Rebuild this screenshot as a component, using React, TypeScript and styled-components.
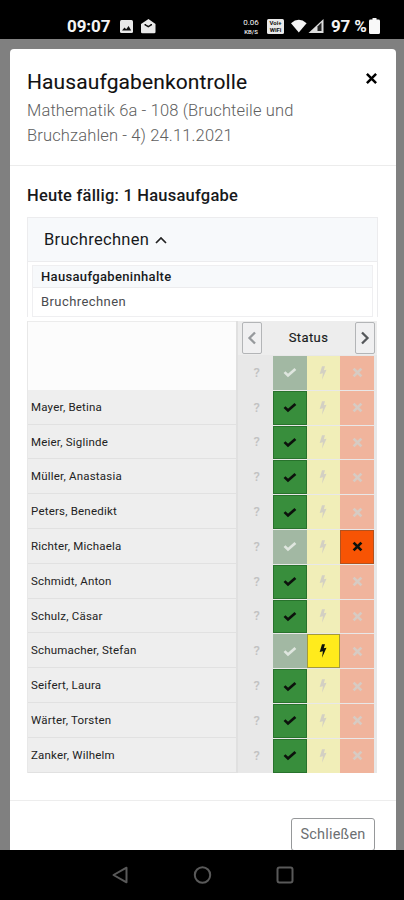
import React from "react";
import styled, { createGlobalStyle } from "styled-components";

const Global = createGlobalStyle`
  * { box-sizing: border-box; }
  body { margin: 0; background: #000; font-family: Roboto, "Liberation Sans", sans-serif; color: #17191c; }
`;

const Screen = styled.div`
  width: 404px;
  height: 900px;
  display: flex;
  flex-direction: column;
  overflow: hidden;
  background: #000;
`;

const StatusBar = styled.header`
  height: 39px;
  flex: none;
  display: flex;
  align-items: center;
  padding: 13px 24px 0 67px;
  color: #f4f4f4;
  font-size: 17px;
  font-weight: 700;
  svg { display: block; flex: none; }
`;
const Clock = styled.span`
  width: 53px;
  letter-spacing: -0.1px;
  line-height: 22px;
`;
const Spacer = styled.span`
  flex: 1;
`;
const NetRate = styled.span`
  display: flex;
  flex-direction: column;
  width: 18px;
  margin-right: 7px;
  font-size: 8px;
  line-height: 10px;
  font-weight: 400;
  text-align: center;
  small { font-size: 6px; line-height: 7px; font-weight: 500; }
`;
const Wifi = styled.span`
  display: flex;
  flex-direction: column;
  justify-content: center;
  width: 17px;
  height: 15px;
  margin-right: 7px;
  border-radius: 1.5px;
  background: #e9e9e9;
  color: #111;
  font-size: 6px;
  line-height: 7px;
  text-align: center;
`;
const Percent = styled.span`
  margin-left: 7px;
  width: 38px;
  white-space: nowrap;
  font-size: 17px;
  line-height: 22px;
  letter-spacing: -0.2px;
`;

const Backdrop = styled.main`
  flex: 1;
  min-height: 0;
  padding: 10px 8px 0 10px;
  background: #808080;
`;
const Dialog = styled.section`
  height: 100%;
  display: flex;
  flex-direction: column;
  overflow: hidden;
  border-radius: 4px 4px 0 0;
  background: #fff;
`;
const DialogHead = styled.div`
  height: 117px;
  flex: none;
  display: flex;
  justify-content: space-between;
  padding: 19px 18px 0 17px;
  border-bottom: 1px solid #ececec;
`;
const Title = styled.h1`
  margin: 0;
  font-size: 21px;
  line-height: 28px;
  font-weight: 400;
  letter-spacing: 0.11px;
  color: #111;
  -webkit-text-stroke: 0.1px #111;
`;
const Subtitle = styled.p`
  margin: 2px 0 0;
  width: 300px;
  font-size: 16.5px;
  line-height: 25px;
  font-weight: 300;
  letter-spacing: 0.14px;
  color: #606060;
`;
const CloseIcon = styled.button`
  height: 20px;
  padding: 0;
  border: 0;
  background: none;
  svg { display: block; }
`;
const DialogBody = styled.div`
  flex: none;
  height: 635px;
  padding: 18px 18px 0 17px;
  border-bottom: 1px solid #ededed;
`;
const Due = styled.h2`
  margin: 0 0 9px;
  font-size: 16.5px;
  line-height: 24px;
  font-weight: 500;
  letter-spacing: 0.22px;
`;
const Card = styled.div`
  border: 1px solid #ececee;
  border-bottom: 0;
`;
const CardToggle = styled.div`
  height: 44px;
  display: flex;
  align-items: center;
  gap: 6px;
  padding-left: 16px;
  border-bottom: 1px solid #ececee;
  background: #f7f9fb;
  font-size: 16.5px;
  letter-spacing: 0.3px;
`;
const Contents = styled.div`
  margin: 3px 4px 4px;
  border: 1px solid #efeff1;
  font-size: 13px;
  letter-spacing: 0.34px;
`;
const ContentsHead = styled.div`
  height: 22px;
  padding-left: 8px;
  border-bottom: 1px solid #ececee;
  background: #f7f9fb;
  font-weight: 500;
  line-height: 21px;
`;
const ContentsLine = styled.div`
  height: 28px;
  padding-left: 8px;
  line-height: 27px;
  letter-spacing: 0.42px;
  color: #4a4c4f;
`;

const Grid = styled.div`
  display: flex;
  width: 350px;
  height: 452px;
  background: #ececec;
`;
const Names = styled.div`
  width: 211px;
  border-right: 2px solid #e0e0e0;
  border-left: 1px solid #e8e8e8;
`;
const NamesHead = styled.div`
  height: 68.8px;
  border-top: 1px solid #ececec;
  background: #fcfcfc;
`;
const Name = styled.div`
  height: 34.8px;
  padding-left: 3px;
  border-bottom: 1px solid #e1e1e1;
  background: #eee;
  font-size: 11.5px;
  line-height: 35.4px;
  letter-spacing: 0.2px;
  color: #222;
`;
const Statuses = styled.div`
  flex: 1;
  background: #e8e8e8;
`;
const StatusNav = styled.div`
  height: 34px;
  display: flex;
  align-items: flex-start;
  justify-content: space-between;
  padding: 1px 2px 0 4px;
  background: #ededed;
  font-size: 13px;
  line-height: 32px;
  letter-spacing: 0.4px;
  -webkit-text-stroke: 0.15px #222;
`;
const NavButton = styled.button<{ $strong?: boolean }>`
  width: 20px;
  height: 32px;
  display: grid;
  place-items: center;
  padding: 0;
  border: 1px solid #b3b5b7;
  border-radius: 2px;
  background: #f0f0f1;
  color: ${(p) => (p.$strong ? "#55585b" : "#96999c")};
`;
const StatusRow = styled.div`
  height: 34.8px;
  display: grid;
  grid-template-columns: 34.5px 34px 33.5px 34px;
  background: #e8e8e8;
`;

type Kind = "none" | "done" | "partial" | "missing";
const fills: Record<Kind, [string, string]> = {
  none: ["#e8e8e8", "#e8e8e8"],
  done: ["#a2b8a3", "#388e3c"],
  partial: ["#f1eeb8", "#ffeb1c"],
  missing: ["#f0b49c", "#f75404"],
};
const edges: Record<Kind, string> = {
  none: "#e8e8e8",
  done: "#28722c",
  partial: "#a49a3c",
  missing: "#b2521e",
};
const inks: Record<Kind, string> = {
  none: "#c2c2c2",
  done: "#dfe6df",
  partial: "#d3d0c3",
  missing: "#d7cbc3",
};
const Cell = styled.div<{ $kind: Kind; $on: boolean }>`
  display: grid;
  place-items: center;
  margin-top: ${(p) => (p.$kind === "none" ? 0 : "1px")};
  padding-left: ${(p) => (p.$kind === "none" ? "3px" : 0)};
  border: 1px solid ${(p) => (p.$on ? edges[p.$kind] : fills[p.$kind][0])};
  background: ${(p) => fills[p.$kind][p.$on ? 1 : 0]};
  color: ${(p) => (p.$on ? "#0c120c" : inks[p.$kind])};
  font-size: 13px;
  font-weight: 500;
  svg { display: block; }
`;

const Footer = styled.div`
  display: flex;
  justify-content: flex-end;
  padding: 17px 21px 0;
`;
const CloseButton = styled.button`
  width: 84px;
  height: 33px;
  padding: 0;
  border: 1px solid #96989a;
  border-radius: 3px;
  background: #fff;
  color: #6c6f72;
  font-family: inherit;
  font-size: 14.5px;
  letter-spacing: 0.2px;
`;
const NavBar = styled.nav`
  height: 50px;
  flex: none;
  display: flex;
  align-items: center;
  gap: 62px;
  padding-left: 111px;
  svg { display: block; }
`;

const Check = () => (
  <svg width="14" height="11" viewBox="0 0 14 11">
    <path d="M1.5 5.1 5 8.5 12.4 1.9" fill="none" stroke="currentColor" strokeWidth="2.7" />
  </svg>
);
const Bolt = () => (
  <svg width="8" height="14" viewBox="0 0 8 14">
    <path d="M3 .2h3L4.8 4.2 7.5 3.7 3 13.7 3.9 7.2.7 7.9Z" fill="currentColor" />
  </svg>
);
const Cross = ({ size = 11 }: { size?: number }) => (
  <svg width={size} height={size} viewBox="0 0 11 11">
    <path d="M1.6 1.6 9.4 9.4M9.4 1.6 1.6 9.4" fill="none" stroke="currentColor" strokeWidth={size > 11 ? 2.1 : 2.7} />
  </svg>
);
const Chevron = ({ left }: { left?: boolean }) => (
  <svg width="10" height="14" viewBox="0 0 10 14">
    <path d={left ? "M8 1.5 2.5 7 8 12.5" : "M2 1.5 7.5 7 2 12.5"} fill="none" stroke="currentColor" strokeWidth="2.3" />
  </svg>
);

const kinds: Kind[] = ["none", "done", "partial", "missing"];
const StatusCells = ({ value }: { value?: Kind }) => (
  <StatusRow>
    {kinds.map((k) => (
      <Cell key={k} $kind={k} $on={value === k}>
        {k === "none" && "?"}
        {k === "done" && <Check />}
        {k === "partial" && <Bolt />}
        {k === "missing" && <Cross />}
      </Cell>
    ))}
  </StatusRow>
);

const pupils: { name: string; value: Kind }[] = [
  { name: "Mayer, Betina", value: "done" },
  { name: "Meier, Siglinde", value: "done" },
  { name: "Müller, Anastasia", value: "done" },
  { name: "Peters, Benedikt", value: "done" },
  { name: "Richter, Michaela", value: "missing" },
  { name: "Schmidt, Anton", value: "done" },
  { name: "Schulz, Cäsar", value: "done" },
  { name: "Schumacher, Stefan", value: "partial" },
  { name: "Seifert, Laura", value: "done" },
  { name: "Wärter, Torsten", value: "done" },
  { name: "Zanker, Wilhelm", value: "done" },
];

export default function App() {
  return (
    <Screen>
      <Global />
      <StatusBar>
        <Clock>09:07</Clock>
        <svg width="13" height="13" viewBox="0 0 13 13">
          <rect width="13" height="13" rx="1.5" fill="#e9e9e9" />
          <path d="M2 10.5 4.5 7.5l1.7 1.8L8.6 6l2.6 4.5Z" fill="#111" />
        </svg>
        <svg width="23" height="15" viewBox="0 0 23 15">
          <path d="M8 5 15.5 0 22.5 5V13q0 1.3-1.3 1.3H9.3Q8 14.3 8 13Z" fill="#e9e9e9" />
          <path d="M11.5 5h7.5v1.3L15.3 8.5 11.5 6.3Z" fill="#111" />
          <path d="M13 4h4.5v1.4L15.3 6.7 13 5.4Z" fill="#e9e9e9" />
        </svg>
        <Spacer />
        <NetRate>0.06<small>KB/S</small></NetRate>
        <Wifi><span>Voi+</span><span>WiFi</span></Wifi>
        <svg width="33" height="15" viewBox="0 0 33 15">
          <path d="M0 4.2Q7.8-2.6 15.6 4.2L7.8 13.5Z" fill="#f4f4f4" />
          <path d="M17.5 14 32.5 0V14Z" fill="#ddd" />
          <path d="M26.5 7.5 30.5 3.5V12H26.5Z" fill="#222" />
        </svg>
        <Percent>97 %</Percent>
        <svg width="11" height="16" viewBox="0 0 11 16">
          <path d="M3.5 0h4v1.6H9.5Q11 1.6 11 3v11.5Q11 16 9.5 16h-8Q0 16 0 14.5V3q0-1.4 1.5-1.4h2Z" fill="#f8f8f8" />
        </svg>
      </StatusBar>
      <Backdrop>
        <Dialog>
          <DialogHead>
            <div>
              <Title>Hausaufgabenkontrolle</Title>
              <Subtitle>Mathematik 6a - 108 (Bruchteile und Bruchzahlen - 4) 24.11.2021</Subtitle>
            </div>
            <CloseIcon aria-label="Schließen"><Cross size={13} /></CloseIcon>
          </DialogHead>
          <DialogBody>
            <Due>Heute fällig: 1 Hausaufgabe</Due>
            <Card>
              <CardToggle>
                Bruchrechnen
                <svg width="12" height="8" viewBox="0 0 12 8">
                  <path d="M1 7 6 2 11 7" fill="none" stroke="#222" strokeWidth="1.7" />
                </svg>
              </CardToggle>
              <Contents>
                <ContentsHead>Hausaufgabeninhalte</ContentsHead>
                <ContentsLine>Bruchrechnen</ContentsLine>
              </Contents>
            </Card>
            <Grid>
              <Names>
                <NamesHead />
                {pupils.map((p) => <Name key={p.name}>{p.name}</Name>)}
              </Names>
              <Statuses>
                <StatusNav>
                  <NavButton aria-label="Zurück"><Chevron left /></NavButton>
                  Status
                  <NavButton $strong aria-label="Weiter"><Chevron /></NavButton>
                </StatusNav>
                <StatusCells />
                {pupils.map((p) => <StatusCells key={p.name} value={p.value} />)}
              </Statuses>
            </Grid>
          </DialogBody>
          <Footer><CloseButton>Schließen</CloseButton></Footer>
        </Dialog>
      </Backdrop>
      <NavBar>
        <svg width="20" height="20" viewBox="0 0 20 20">
          <path d="M2.5 10 15.5 2.7V17.3Z" fill="none" stroke="#595959" strokeWidth="2" strokeLinejoin="round" />
        </svg>
        <svg width="20" height="20" viewBox="0 0 20 20">
          <circle cx="9.5" cy="10" r="7.7" fill="none" stroke="#595959" strokeWidth="2" />
        </svg>
        <svg width="20" height="20" viewBox="0 0 20 20">
          <rect x="2.5" y="2.5" width="15" height="15" rx="2" fill="none" stroke="#595959" strokeWidth="2" />
        </svg>
      </NavBar>
    </Screen>
  );
}
